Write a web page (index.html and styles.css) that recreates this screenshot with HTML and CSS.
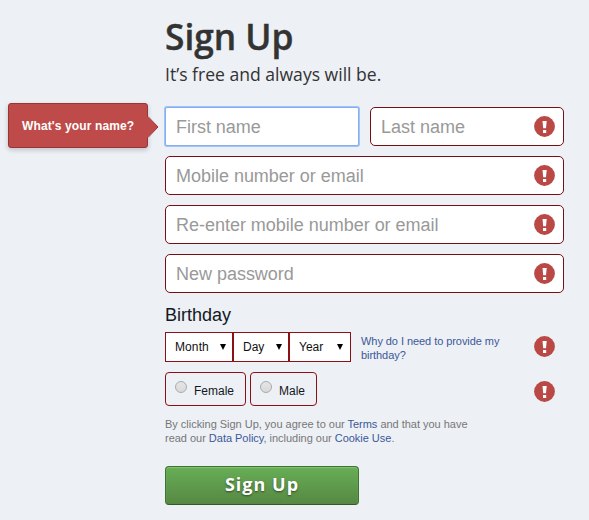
FILE: index.html
```html
<!DOCTYPE html>
<html lang="en">
<head>
<meta charset="utf-8">
<title>Sign Up</title>
<link rel="stylesheet" href="styles.css">
</head>
<body>
<svg class="defs" width="0" height="0"><symbol id="alert" viewBox="0 0 21 21"><circle cx="10.5" cy="10.5" r="10.4" fill="#ba4845"/><path d="M8.5 5h4.2l-.7 7.2H9.2zM9 14h3.2v3H9z" fill="#fff"/></symbol></svg>
<main class="signup">
  <h1><span>Sign Up</span></h1>
  <p class="tagline"><span>It’s free and always will be.</span></p>
  <form>
    <div class="names">
      <div class="field focused"><span>First name</span>
        <div class="tip">What's your name?<svg width="12" height="22" viewBox="0 0 12 22"><path d="M0 0L11 11L0 22z" fill="#be4b49"/><path d="M1 .5L11 11L1 21.5" fill="none" stroke="#943735"/></svg></div>
      </div>
      <div class="field"><span>Last name</span><svg class="alert"><use href="#alert"/></svg></div>
    </div>
    <div class="field"><span>Mobile number or email</span><svg class="alert"><use href="#alert"/></svg></div>
    <div class="field"><span>Re-enter mobile number or email</span><svg class="alert"><use href="#alert"/></svg></div>
    <div class="field"><span>New password</span><svg class="alert"><use href="#alert"/></svg></div>
    <div class="label">Birthday</div>
    <div class="birthday">
      <div class="select month">Month<svg class="arrow" viewBox="0 0 6 6"><path d="M0 0h6L3 6z"/></svg></div>
      <div class="select day">Day<svg class="arrow" viewBox="0 0 6 6"><path d="M0 0h6L3 6z"/></svg></div>
      <div class="select year">Year<svg class="arrow" viewBox="0 0 6 6"><path d="M0 0h6L3 6z"/></svg></div>
      <a class="why">Why do I need to provide my birthday?</a>
      <svg class="alert"><use href="#alert"/></svg>
    </div>
    <div class="gender">
      <div class="choice female"><i class="radio"></i><span>Female</span></div>
      <div class="choice male"><i class="radio"></i><span>Male</span></div>
      <svg class="alert"><use href="#alert"/></svg>
    </div>
    <p class="terms">By clicking Sign Up, you agree to our <a>Terms</a> and that you have<br>read our <a>Data Policy</a>, including our <a>Cookie Use</a>.</p>
    <button type="button"><span>Sign Up</span></button>
  </form>
</main>
</body>
</html>
```
FILE: styles.css
```css
* { box-sizing: border-box; }
body { margin: 0; background: #edf0f5; font-family: "Liberation Sans", Arial, sans-serif; color: #141823; height: 520px; overflow: hidden; }
.defs { position: absolute; }
.signup { width: 399px; margin-left: 165px; padding-top: 12px; }
h1, .tagline { margin: 0; font-family: "Open Sans", sans-serif; color: #333; white-space: nowrap; }
h1 { font-size: 36px; font-weight: 600; line-height: 49px; height: 49px; -webkit-text-stroke: .4px #333; }
h1 span, .tagline span { display: inline-block; transform-origin: left; }
h1 span { transform: scaleX(.98); }
.tagline { font-size: 18px; line-height: 26px; height: 46px; }
.tagline span { transform: scaleX(.976); }
.names { display: grid; grid-template-columns: 194px 194px; gap: 11px; margin-bottom: 10px; }
.field { position: relative; display: flex; align-items: center; justify-content: space-between; height: 39px; margin-bottom: 10px; padding: 0 9px 0 10px; border: 1px solid #750f13; border-radius: 5px; background: #fff; color: #999; font-size: 18px; }
.field > span { padding-top: 2px; letter-spacing: -.02px; }
.names .field { margin-bottom: 0; }
.focused { border-color: #86aff0; border-radius: 2px; box-shadow: 0 0 0 1px #a2c3f5; }
.alert { width: 21px; height: 21px; flex: none; }
.field .alert { margin-right: -1px; }
.tip { position: absolute; left: -158px; top: -5px; width: 140px; height: 45px; border: 1px solid #943735; border-radius: 3px; background: #be4b49; box-shadow: 0 2px 5px rgba(0,0,0,.2); color: #fff; font-size: 12px; font-weight: bold; line-height: 44px; padding-left: 13px; letter-spacing: .12px; white-space: nowrap; }
.tip svg { position: absolute; left: 138px; top: 12px; }
.label { font-size: 18px; line-height: 22px; margin-top: 11px; height: 28px; }
.birthday { display: flex; align-items: center; height: 30px; }
.select { display: flex; align-items: center; justify-content: space-between; height: 30px; padding: 0 6px 0 9px; border: 1px solid #8b1114; background: #fff; font-size: 12px; color: #111; }
.month { width: 68px; letter-spacing: .1px; }
.day { width: 56px; }
.year { width: 62px; padding-right: 7px; }
.arrow { width: 6px; height: 6px; }
.why { width: 150px; margin-left: 10px; font-size: 11px; line-height: 14px; letter-spacing: -.06px; color: #3b5998; padding-top: 2px; }
.birthday .alert, .gender .alert { margin-left: auto; margin-right: 9px; }
.birthday .alert { margin-bottom: 1px; }
.gender { display: flex; align-items: center; height: 34px; margin-top: 10px; }
.choice { display: flex; height: 34px; padding-left: 9px; border: 1px solid #8b1114; border-radius: 4px; font-size: 12px; line-height: 36px; }
.female { width: 81px; margin-right: 4px; }
.male { width: 67px; }
.radio { width: 12px; height: 12px; margin: 8px 7px 0 0; border: 1px solid #aaa; border-radius: 50%; background: linear-gradient(#e6e6e6, #d9d9d9); }
.gender .alert { margin-top: 4px; }
.terms { margin: 11px 0 0; height: 49px; font-size: 11px; line-height: 14px; letter-spacing: -.02px; color: #777; white-space: nowrap; }
.terms a { color: #3b5998; }
button { display: block; width: 194px; height: 39px; padding: 0; border: 1px solid #3f7334; border-bottom-color: #315a29; border-radius: 4px; background: linear-gradient(#67ae55, #578843); box-shadow: inset 0 1px 1px #86c571; color: #fff; font: bold 18px/34px "Open Sans", sans-serif; letter-spacing: 1px; text-shadow: 0 1px 2px rgba(0,0,0,.5); }
button span { display: block; padding-bottom: 3px; }
```
